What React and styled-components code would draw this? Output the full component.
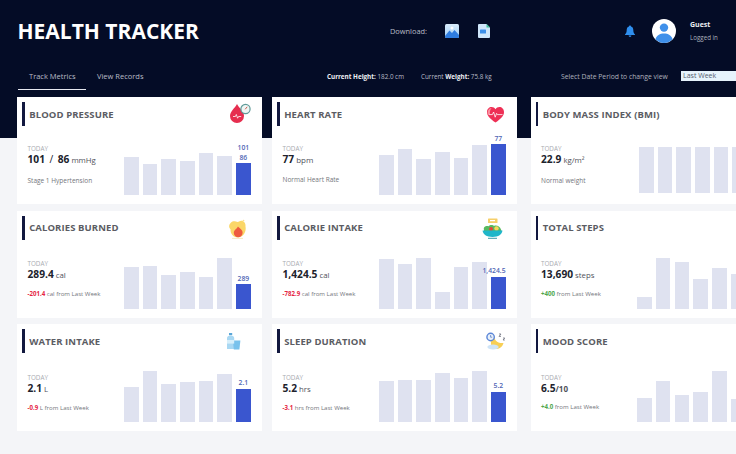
import React from "react";
import styled, { createGlobalStyle } from "styled-components";

const Global = createGlobalStyle`
  html, body { margin: 0; padding: 0; background: #f4f5f8; }
  * { box-sizing: border-box; }
`;

const Page = styled.div`
  width: 736px;
  height: 454px;
  overflow: hidden;
  font-family: "Open Sans", sans-serif;
  background: linear-gradient(#040c26 0 138px, #f4f5f8 138px);
`;

const TopBar = styled.header`
  display: grid;
  grid-template-columns: 390px 235px 1fr;
  align-items: center;
  height: 62px;
  padding-left: 18px;
  color: #fff;
`;

const Brand = styled.h1`
  margin: 0;
  font-size: 21px;
  font-weight: 700;
  color: #fff;
  margin-left: -0.5px;
`;

const Downloads = styled.div`
  display: flex;
  align-items: center;
  margin-left: -18px;
  font-size: 7.4px;
  color: #b9bcc6;
`;

const DownloadLabel = styled.span`
  width: 55px;
`;

const DownloadIcon = styled.span`
  display: flex;
  width: 33px;
`;

const UserArea = styled.div`
  display: flex;
  align-items: center;
  margin-left: -18px;
`;

const BellWrap = styled.span`
  display: flex;
  width: 27px;
`;

const UserText = styled.div`
  margin-left: 14px;
  display: flex;
  flex-direction: column;
  gap: 4px;
`;

const UserName = styled.span`
  font-size: 7px;
  font-weight: 700;
  color: #eef0f4;
`;

const UserStatus = styled.span`
  font-size: 6.2px;
  color: #aeb2bd;
`;

const NavRow = styled.nav`
  display: grid;
  grid-template-columns: 309px 234px 120px 1fr;
  align-items: center;
  height: 35px;
  padding-left: 18px;
  padding-bottom: 7px;
`;

const Tabs = styled.div`
  display: flex;
  align-items: center;
`;

const Tab = styled.span`
  width: ${(p) => (p.$active ? "68px" : "auto")};
  margin-left: ${(p) => (p.$active ? "0" : "11px")};
  padding: ${(p) => (p.$active ? "0 0 0 11px" : "0")};
  height: 28px;
  line-height: 28px;
  font-size: 7.5px;
  color: #b9bcc6;
  border-bottom: ${(p) => (p.$active ? "1.5px solid #e6e8ef" : "0")};
`;

const Metrics = styled.div`
  display: flex;
  gap: 17px;
  font-size: 6.3px;
  color: #b9bcc6;
  white-space: nowrap;
  b { color: #eef0f4; font-weight: 700; }
`;

const PeriodLabel = styled.span`
  font-size: 6.8px;
  color: #aeb2bd;
  white-space: nowrap;
`;

const PeriodSelect = styled.div`
  width: 70px;
  height: 10px;
  padding-left: 2px;
  background: #e6f3fc;
  color: #54606e;
  font-size: 7px;
  line-height: 10px;
`;

const Grid = styled.main`
  display: grid;
  grid-template-columns: 255px 258.5px 245px;
  grid-auto-rows: 107px;
  row-gap: 6.5px;
  padding-left: 17px;
`;

const Card = styled.section`
  width: 245px;
  padding: 5px 11px 9px 5px;
  background: #fff;
  display: flex;
  flex-direction: column;
`;

const CardHead = styled.div`
  display: flex;
  align-items: center;
  height: 24px;
  flex: none;
`;

const Accent = styled.span`
  width: 2.7px;
  height: 24px;
  background: #12183f;
`;

const CardTitle = styled.h2`
  margin: 0 0 0 4.5px;
  flex: 1;
  font-size: 9.5px;
  font-weight: 700;
  letter-spacing: 0.1px;
  color: #5b5c63;
  white-space: nowrap;
`;

const IconBox = styled.span`
  display: flex;
  margin-top: ${(p) => p.$mt || 0}px;
  margin-right: ${(p) => p.$mr || 0}px;
`;

const CardBody = styled.div`
  flex: 1;
  display: flex;
  align-items: flex-end;
`;

const Info = styled.div`
  align-self: flex-start;
  flex: none;
  width: ${(p) => p.$w || 102}px;
  padding-left: 5.5px;
  padding-top: ${(p) => p.$pt}px;
  display: flex;
  flex-direction: column;
`;

const Today = styled.span`
  font-size: 6.3px;
  line-height: 9px;
  color: #a9abb1;
`;

const Value = styled.div`
  font-size: 10.2px;
  line-height: 13px;
  font-weight: 700;
  color: #20222c;
  white-space: nowrap;
`;

const Unit = styled.span`
  font-size: ${(p) => p.$size || 7.8}px;
  font-weight: ${(p) => p.$weight || 400};
  color: #50525b;
  margin-left: ${(p) => (p.$tight ? 0 : 2)}px;
`;

const Slash = styled.span`
  font-weight: 400;
  margin: 0 4.5px;
`;

const Note = styled.div`
  margin-top: ${(p) => p.$mt || 7}px;
  font-size: ${(p) => (p.$compact ? 6.1 : 6.5)}px;
  line-height: 9px;
  color: #74767c;
  white-space: nowrap;
`;

const Delta = styled.b`
  color: ${(p) => (p.$up ? "#4ea64e" : "#e5243f")};
  font-weight: 700;
`;

const Chart = styled.div`
  display: flex;
  align-items: flex-end;
  gap: 4.2px;
  flex: none;
  margin-bottom: ${(p) => p.$mb || 0}px;
`;

const BarColumn = styled.div`
  width: 14.5px;
  display: flex;
  flex-direction: column;
  align-items: ${(p) => (p.$wide ? "flex-end" : "center")};
`;

const BarValue = styled.span`
  font-size: 6.8px;
  line-height: 8.5px;
  font-weight: 600;
  color: #4f66b5;
  text-align: center;
  white-space: nowrap;
  padding-bottom: 1px;
`;

const Bar = styled.div`
  width: 100%;
  background: ${(p) => (p.$active ? "#3a56cf" : "#dfe2f0")};
`;

const ImageIcon = () => (
  <svg width="14" height="14" viewBox="0 0 14 14">
    <defs>
      <linearGradient id="imgbg" x1="0" y1="0" x2="0" y2="1">
        <stop offset="0" stopColor="#d9ecfb" />
        <stop offset="1" stopColor="#9fcdf3" />
      </linearGradient>
    </defs>
    <rect width="14" height="14" rx="1.5" fill="url(#imgbg)" />
    <path d="M0 12 L4.5 6.5 L7 9 L9.5 6 L14 11 V12.5 A1.5 1.5 0 0 1 12.5 14 H1.5 A1.5 1.5 0 0 1 0 12.5Z" fill="#2f7de0" />
    <circle cx="7" cy="4" r="1.5" fill="#fff" />
  </svg>
);

const DocIcon = () => (
  <svg width="12" height="14" viewBox="0 0 12 14">
    <path d="M0 1 A1 1 0 0 1 1 0 H8.5 L12 3.5 V13 A1 1 0 0 1 11 14 H1 A1 1 0 0 1 0 13Z" fill="#cfe6fa" />
    <path d="M8.5 0 L12 3.5 H8.5Z" fill="#3fbf9a" />
    <rect x="2" y="5.5" width="6" height="4" rx="0.6" fill="#3d8fe8" />
  </svg>
);

const BellIcon = () => (
  <svg width="10" height="12" viewBox="0 0 10 12">
    <path d="M5 0.4 C5.6 0.4 6 0.8 6 1.4 C7.7 1.9 8.3 3.3 8.3 5 C8.3 7 8.7 8 10 9.4 V10 H0 V9.4 C1.3 8 1.7 7 1.7 5 C1.7 3.3 2.3 1.9 4 1.4 C4 0.8 4.4 0.4 5 0.4Z" fill="#2f8fee" />
    <path d="M3.6 10.6 H6.4 A1.4 1.3 0 0 1 3.6 10.6Z" fill="#2f8fee" />
  </svg>
);

const AvatarIcon = () => (
  <svg width="24" height="24" viewBox="0 0 24 24">
    <circle cx="12" cy="12" r="12" fill="#fff" />
    <circle cx="12" cy="8.6" r="4.2" fill="#3f90ea" />
    <path d="M3.4 20.3 C4.6 16.4 7.8 14.6 12 14.6 C16.2 14.6 19.4 16.4 20.6 20.3 A12 12 0 0 1 3.4 20.3Z" fill="#3f90ea" />
  </svg>
);

const BloodIcon = () => (
  <svg width="21" height="20" viewBox="0 0 21 20">
    <path d="M7 1 C9 5 14 8.5 14 13 A7 7 0 0 1 0 13 C0 8.5 5 5 7 1Z" fill="#e62e4f" />
    <path d="M3 13.5 H5.4 L6.3 11.5 L7.6 15.2 L8.6 13.5 H11.2" stroke="#fff" strokeWidth="0.8" fill="none" />
    <circle cx="15.5" cy="6" r="4.6" fill="#eef6f4" stroke="#5f9a98" strokeWidth="1.2" />
    <path d="M15.2 6.3 L17.2 3.8" stroke="#c9493f" strokeWidth="0.9" />
  </svg>
);

const HeartIcon = () => (
  <svg width="17" height="16" viewBox="0 0 17 16">
    <path d="M8.5 15.6 C3 11.6 0 9 0 5 C0 2 2.2 0 4.6 0 C6.3 0 7.6 0.8 8.5 2.2 C9.4 0.8 10.7 0 12.4 0 C14.8 0 17 2 17 5 C17 9 14 11.6 8.5 15.6Z" fill="#ee2f55" />
    <path d="M0.7 7 C0.2 4 1.8 1.2 4.6 1 C3.2 2.6 2.6 4.6 3 7Z" fill="#fb8e9e" />
    <path d="M1.5 7.6 H5.4 L6.6 5 L8.2 10.2 L9.6 6.4 L10.4 7.6 H15.5" stroke="#fff" strokeWidth="0.8" fill="none" />
  </svg>
);

const BurnIcon = () => (
  <svg width="19" height="20" viewBox="0 0 19 20">
    <path d="M3 3.5 C6 0.5 9 4 11 2.5 C14 0.5 18 3 17.5 7.5 C18.5 12 16 18 10 18.5 C5 18.5 2 14 2.6 10.5 C0.4 8.5 0.6 5.5 3 3.5Z" fill="#fbd768" />
    <path d="M10 7.5 C11.5 9.5 14.8 10.5 14.6 13.8 A4.4 4.4 0 0 1 5.8 13.8 C5.8 11 8.8 10 10 7.5Z" fill="#ee5b3f" />
    <path d="M4 19.4 H15" stroke="#f3e7b8" strokeWidth="0.9" />
    <circle cx="15.5" cy="1.6" r="0.9" fill="#fbe28e" />
  </svg>
);

const BowlIcon = () => (
  <svg width="21" height="21" viewBox="0 0 21 21">
    <rect x="6" y="0.5" width="9.5" height="4.5" rx="0.6" fill="#f6cf6a" />
    <rect x="8" y="2" width="5" height="1.2" fill="#fff" />
    <path d="M2 12 C1 9 4 7.5 6.5 8.2 C8 6.5 11 6.6 12 8 C14 6.8 18 8 19 11.5 L19.5 13 H2Z" fill="#57b95f" />
    <circle cx="9" cy="11" r="2" fill="#e2463c" />
    <circle cx="14.5" cy="10.5" r="2.2" fill="#f6d75b" />
    <path d="M0.6 12.6 H20.4 C20 16.8 16.5 19 10.5 19 C4.5 19 1 16.8 0.6 12.6Z" fill="#1fb6c9" />
    <path d="M6 20.3 H15" stroke="#3b9aa8" strokeWidth="1" />
  </svg>
);

const WaterIcon = () => (
  <svg width="15" height="17" viewBox="0 0 15 17">
    <rect x="3" y="0" width="3.2" height="2.2" fill="#5aa6d8" />
    <path d="M1 5 C1 3.4 2.4 2.4 4.6 2.4 C6.8 2.4 8.2 3.4 8.2 5 V16 H1Z" fill="#a9d8f3" />
    <path d="M7 7.4 H14.4 L13.4 16.6 H7.8Z" fill="#79c2ec" />
    <rect x="1" y="7" width="7.2" height="3.6" fill="#d7effb" />
  </svg>
);

const SleepIcon = () => (
  <svg width="20" height="18" viewBox="0 0 20 18">
    <path d="M8 3 C8 8 11 11.5 17.5 11 C16.5 15 13 17.4 9.5 16.8 C4.5 16 3 10 8 3Z" fill="#f8cf55" />
    <ellipse cx="7" cy="15" rx="5.6" ry="2.6" fill="#cfe4f7" />
    <circle cx="4.6" cy="5" r="4.4" fill="#5b86d8" />
    <circle cx="4.6" cy="5" r="3" fill="#e8f1fb" />
    <path d="M4.6 3 V5.2 H6.2" stroke="#3b5fae" strokeWidth="0.6" fill="none" />
    <path d="M13 2 h2 l-2 2.4 h2 M17 6 h1.8 l-1.8 2 h1.8" stroke="#5c5f70" strokeWidth="0.7" fill="none" />
  </svg>
);

const cards = [
  { title: "BLOOD PRESSURE", icon: <BloodIcon />, iconMt: -2, pad: 18,
    value: (<>101<Slash>/</Slash>86<Unit>mmHg</Unit></>), note: "Stage 1 Hypertension", noteMt: 9,
    bars: [38, 31, 35.7, 34.3, 42.3, 39, 32], label: ["101", "86"] },
  { title: "HEART RATE", icon: <HeartIcon />, iconMt: 1, iconMr: 1.7, pad: 18,
    value: (<>77<Unit $size={8}>bpm</Unit></>), note: "Normal Heart Rate", noteMt: 9,
    bars: [40, 45.7, 36, 43, 36.7, 50, 50.7], label: ["77"] },
  { title: "BODY MASS INDEX (BMI)", pad: 18, infoW: 103.5, chartMb: 2.5,
    value: (<>22.9<Unit>kg/m²</Unit></>), note: "Normal weight", noteMt: 9,
    bars: [46, 46, 46, 46, 46, 46, 46] },
  { title: "CALORIES BURNED", icon: <BurnIcon />, iconMt: 2, iconMr: 4, pad: 19,
    value: (<>289.4<Unit>cal</Unit></>), delta: "-201.4", rest: " cal from Last Week",
    bars: [41.7, 43, 33.4, 36.7, 31.7, 51, 24.4], label: ["289"] },
  { title: "CALORIE INTAKE", icon: <BowlIcon />, iconMt: 2, iconMr: 3, pad: 19,
    value: (<>1,424.5<Unit>cal</Unit></>), delta: "-782.9", rest: " cal from Last Week",
    bars: [49.7, 44.7, 50.7, 16.4, 41.4, 47, 31.7], label: ["1,424.5"], wide: true },
  { title: "TOTAL STEPS", pad: 19, infoW: 101.8,
    value: (<>13,690<Unit>steps</Unit></>), delta: "+400", up: true, rest: " from Last Week",
    bars: [12, 51, 46.7, 30, 40.4, 34.7, 30] },
  { title: "WATER INTAKE", icon: <WaterIcon />, iconMt: 0, iconMr: 10, pad: 19.5,
    value: (<>2.1<Unit>L</Unit></>), delta: "-0.9", rest: " L from Last Week",
    bars: [34.7, 51, 38.3, 39.7, 41.3, 48, 33.3], label: ["2.1"] },
  { title: "SLEEP DURATION", icon: <SleepIcon />, iconMt: 0, pad: 19.5,
    value: (<>5.2<Unit>hrs</Unit></>), delta: "-3.1", rest: " hrs from Last Week",
    bars: [41, 41.7, 41.7, 48.7, 44, 51, 30.3], label: ["5.2"] },
  { title: "MOOD SCORE", pad: 19.5, infoW: 101.8,
    value: (<>6.5<Unit $size={8} $weight={700} $tight>/10</Unit></>), delta: "+4.0", up: true, rest: " from Last Week",
    bars: [24, 41.3, 26.7, 29.7, 51, 23, 30] },
];

const MetricCard = ({ data }) => {
  const last = data.bars.length - 1;
  return (
    <Card>
      <CardHead>
        <Accent />
        <CardTitle>{data.title}</CardTitle>
        {data.icon && <IconBox $mt={data.iconMt} $mr={data.iconMr}>{data.icon}</IconBox>}
      </CardHead>
      <CardBody>
        <Info $pt={data.pad} $w={data.infoW}>
          <Today>TODAY</Today>
          <Value>{data.value}</Value>
          <Note $mt={data.noteMt} $compact={!!data.delta}>
            {data.delta && <Delta $up={data.up}>{data.delta}</Delta>}
            {data.rest || data.note}
          </Note>
        </Info>
        <Chart $mb={data.chartMb}>
          {data.bars.map((h, i) => (
            <BarColumn key={i} $wide={data.wide}>
              {i === last && data.label && data.label.map((t) => <BarValue key={t}>{t}</BarValue>)}
              <Bar $active={i === last && !!data.label} style={{ height: h }} />
            </BarColumn>
          ))}
        </Chart>
      </CardBody>
    </Card>
  );
};

export default function App() {
  return (
    <Page>
      <Global />
      <TopBar>
        <Brand>HEALTH TRACKER</Brand>
        <Downloads>
          <DownloadLabel>Download:</DownloadLabel>
          <DownloadIcon><ImageIcon /></DownloadIcon>
          <DownloadIcon><DocIcon /></DownloadIcon>
        </Downloads>
        <UserArea>
          <BellWrap><BellIcon /></BellWrap>
          <AvatarIcon />
          <UserText>
            <UserName>Guest</UserName>
            <UserStatus>Logged in</UserStatus>
          </UserText>
        </UserArea>
      </TopBar>
      <NavRow>
        <Tabs>
          <Tab $active>Track Metrics</Tab>
          <Tab>View Records</Tab>
        </Tabs>
        <Metrics>
          <span><b>Current Height:</b> 182.0 cm</span>
          <span>Current <b>Weight:</b> 75.8 kg</span>
        </Metrics>
        <PeriodLabel>Select Date Period to change view</PeriodLabel>
        <PeriodSelect>Last Week</PeriodSelect>
      </NavRow>
      <Grid>
        {cards.map((c) => <MetricCard key={c.title} data={c} />)}
      </Grid>
    </Page>
  );
}
